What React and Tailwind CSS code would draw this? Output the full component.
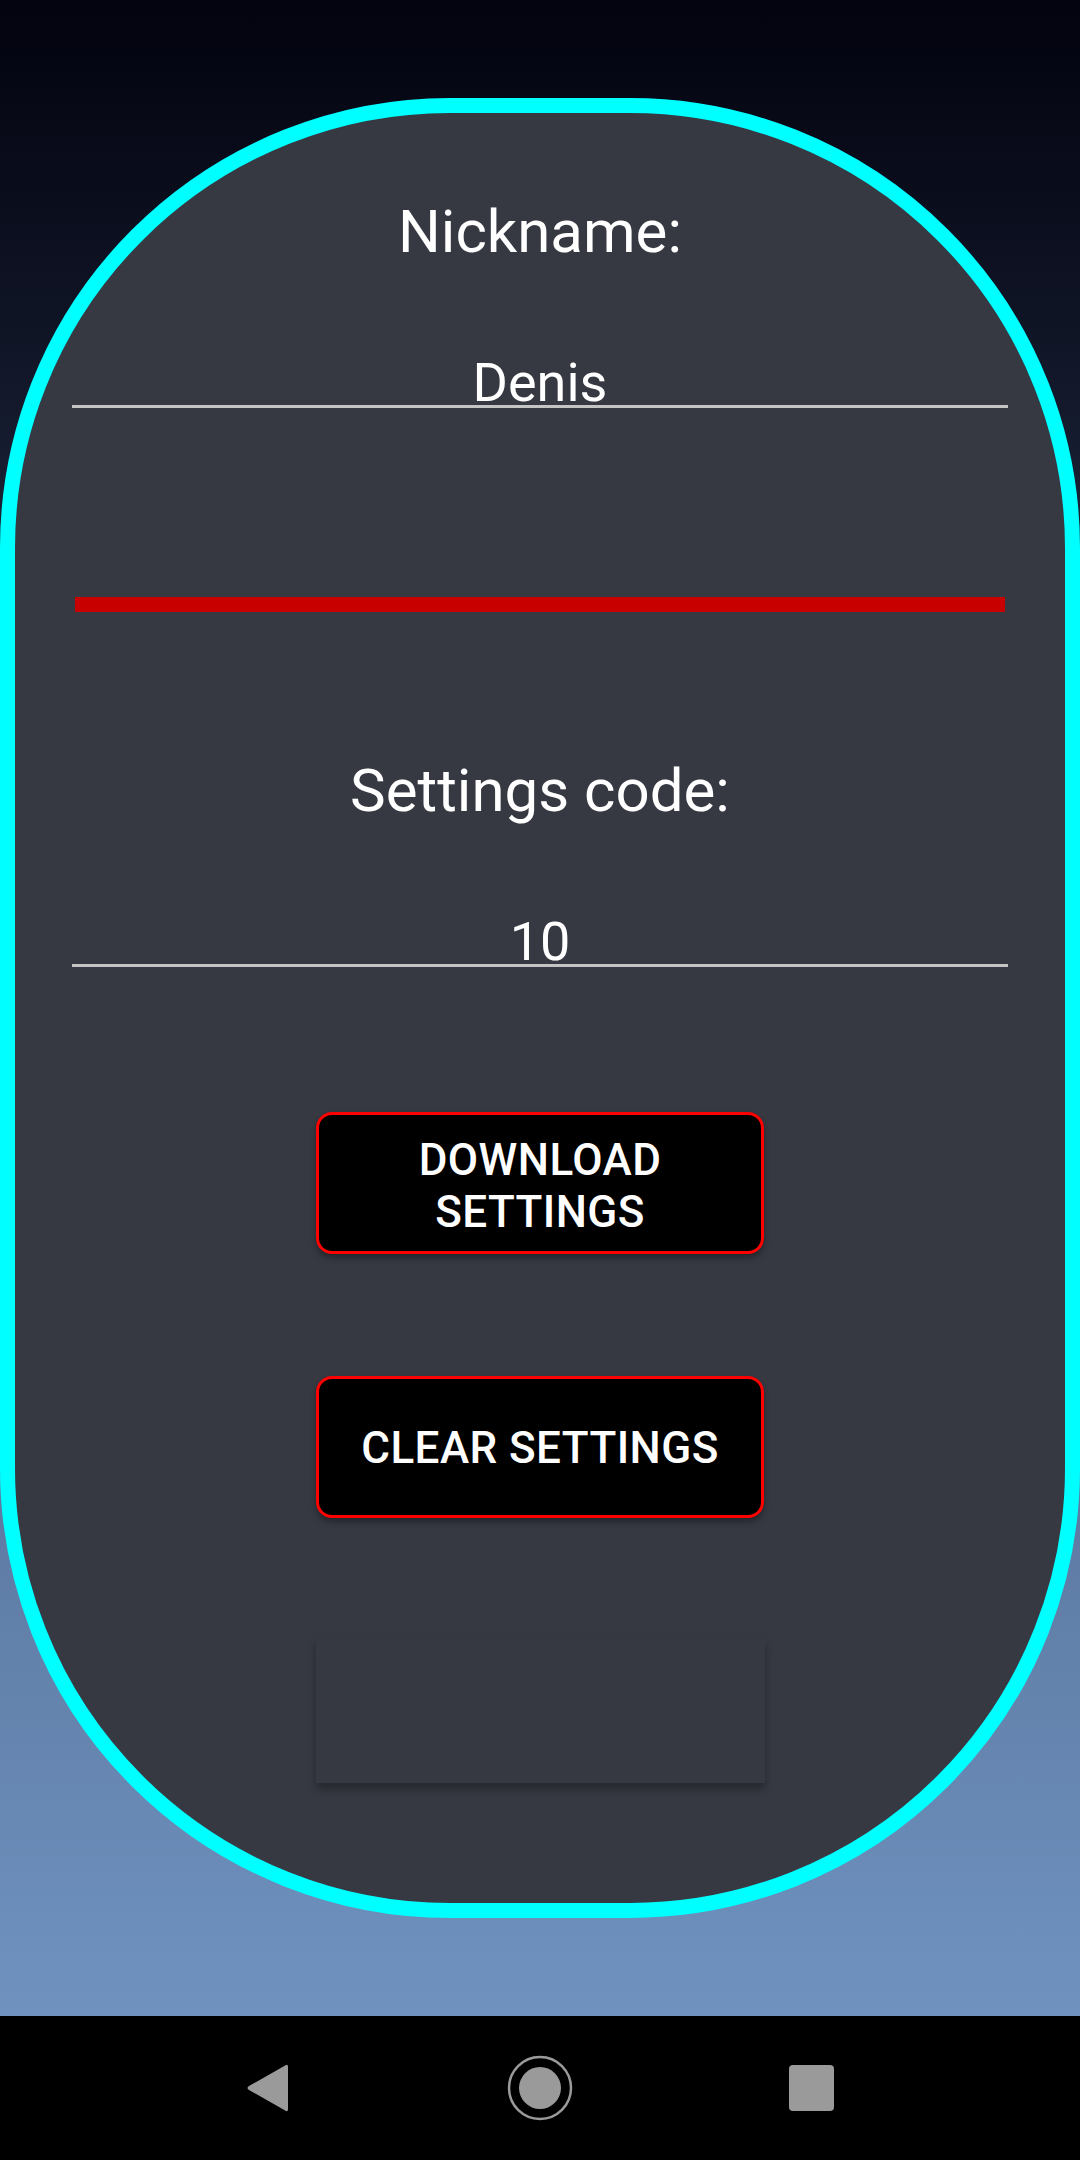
import React from 'react';

const Field = ({ value }) => (
  <div className="mx-[57px] h-[48px] border-b-[3px] border-[#c4c4c4] text-center text-[54px] leading-[45px] text-white">
    {value}
  </div>
);

const ActionButton = ({ children, className = '' }) => (
  <button className={`mx-auto flex h-[142px] w-[448px] items-center justify-center rounded-[16px] border-[3px] border-[#ff0000] bg-black text-center text-[44px] font-medium uppercase leading-[52px] tracking-[0.01em] text-white shadow-[0_4px_6px_rgba(0,0,0,0.35)] ${className}`}>
    {children}
  </button>
);

const NavBar = () => (
  <div className="flex h-[144px] w-full items-center justify-center bg-black">
    <div className="flex w-full items-center justify-between px-[246px]">
      <svg width="44" height="50" viewBox="0 0 44 50">
        <path d="M40 2 Q42 1 42 4 L42 46 Q42 49 40 48 L3 27 Q0 25 3 23 Z" fill="#9a9a9a" />
      </svg>
      <svg width="66" height="66" viewBox="0 0 66 66">
        <circle cx="33" cy="33" r="31" fill="none" stroke="#9a9a9a" strokeWidth="2.5" />
        <circle cx="33" cy="33" r="21" fill="#9a9a9a" />
      </svg>
      <div className="h-[46px] w-[45px] rounded-[4px] bg-[#9a9a9a]" />
    </div>
  </div>
);

export default function App() {
  return (
    <div className="flex h-[2160px] w-[1080px] flex-col font-['Roboto',_'Liberation_Sans',_sans-serif]">
      <div className="h-[2016px] w-full bg-[linear-gradient(to_bottom,#03030f_0px,#0c1020_250px,#1a2236_550px,#3a4e70_1000px,#5b78a0_1450px,#6f92bf_2016px)] pt-[98px]">
        <div className="flex h-[1820px] w-full flex-col rounded-[450px] border-[15px] border-[#00ffff] bg-[#363942]">
          <div className="mt-[89px] text-center text-[60px] leading-[60px] text-white">Nickname:</div>
          <div className="mt-[98px]">
            <Field value="Denis" />
          </div>
          <div className="mx-[60px] mt-[189px] h-[15px] bg-[#c80000]" />
          <div className="mt-[149px] text-center text-[60px] leading-[60px] text-white">Settings code:</div>
          <div className="mt-[98px]">
            <Field value="10" />
          </div>
          <div className="mt-[145px]">
            <ActionButton className="pt-[5px]">
              Download
              <br />
              Settings
            </ActionButton>
          </div>
          <div className="mt-[122px]">
            <ActionButton className="pt-[2px]">Clear Settings</ActionButton>
          </div>
          <div className="mx-auto mt-[121px] h-[144px] w-[449px] bg-[#363942] shadow-[0_6px_8px_rgba(0,0,0,0.3)]" />
        </div>
      </div>
      <NavBar />
    </div>
  );
}
